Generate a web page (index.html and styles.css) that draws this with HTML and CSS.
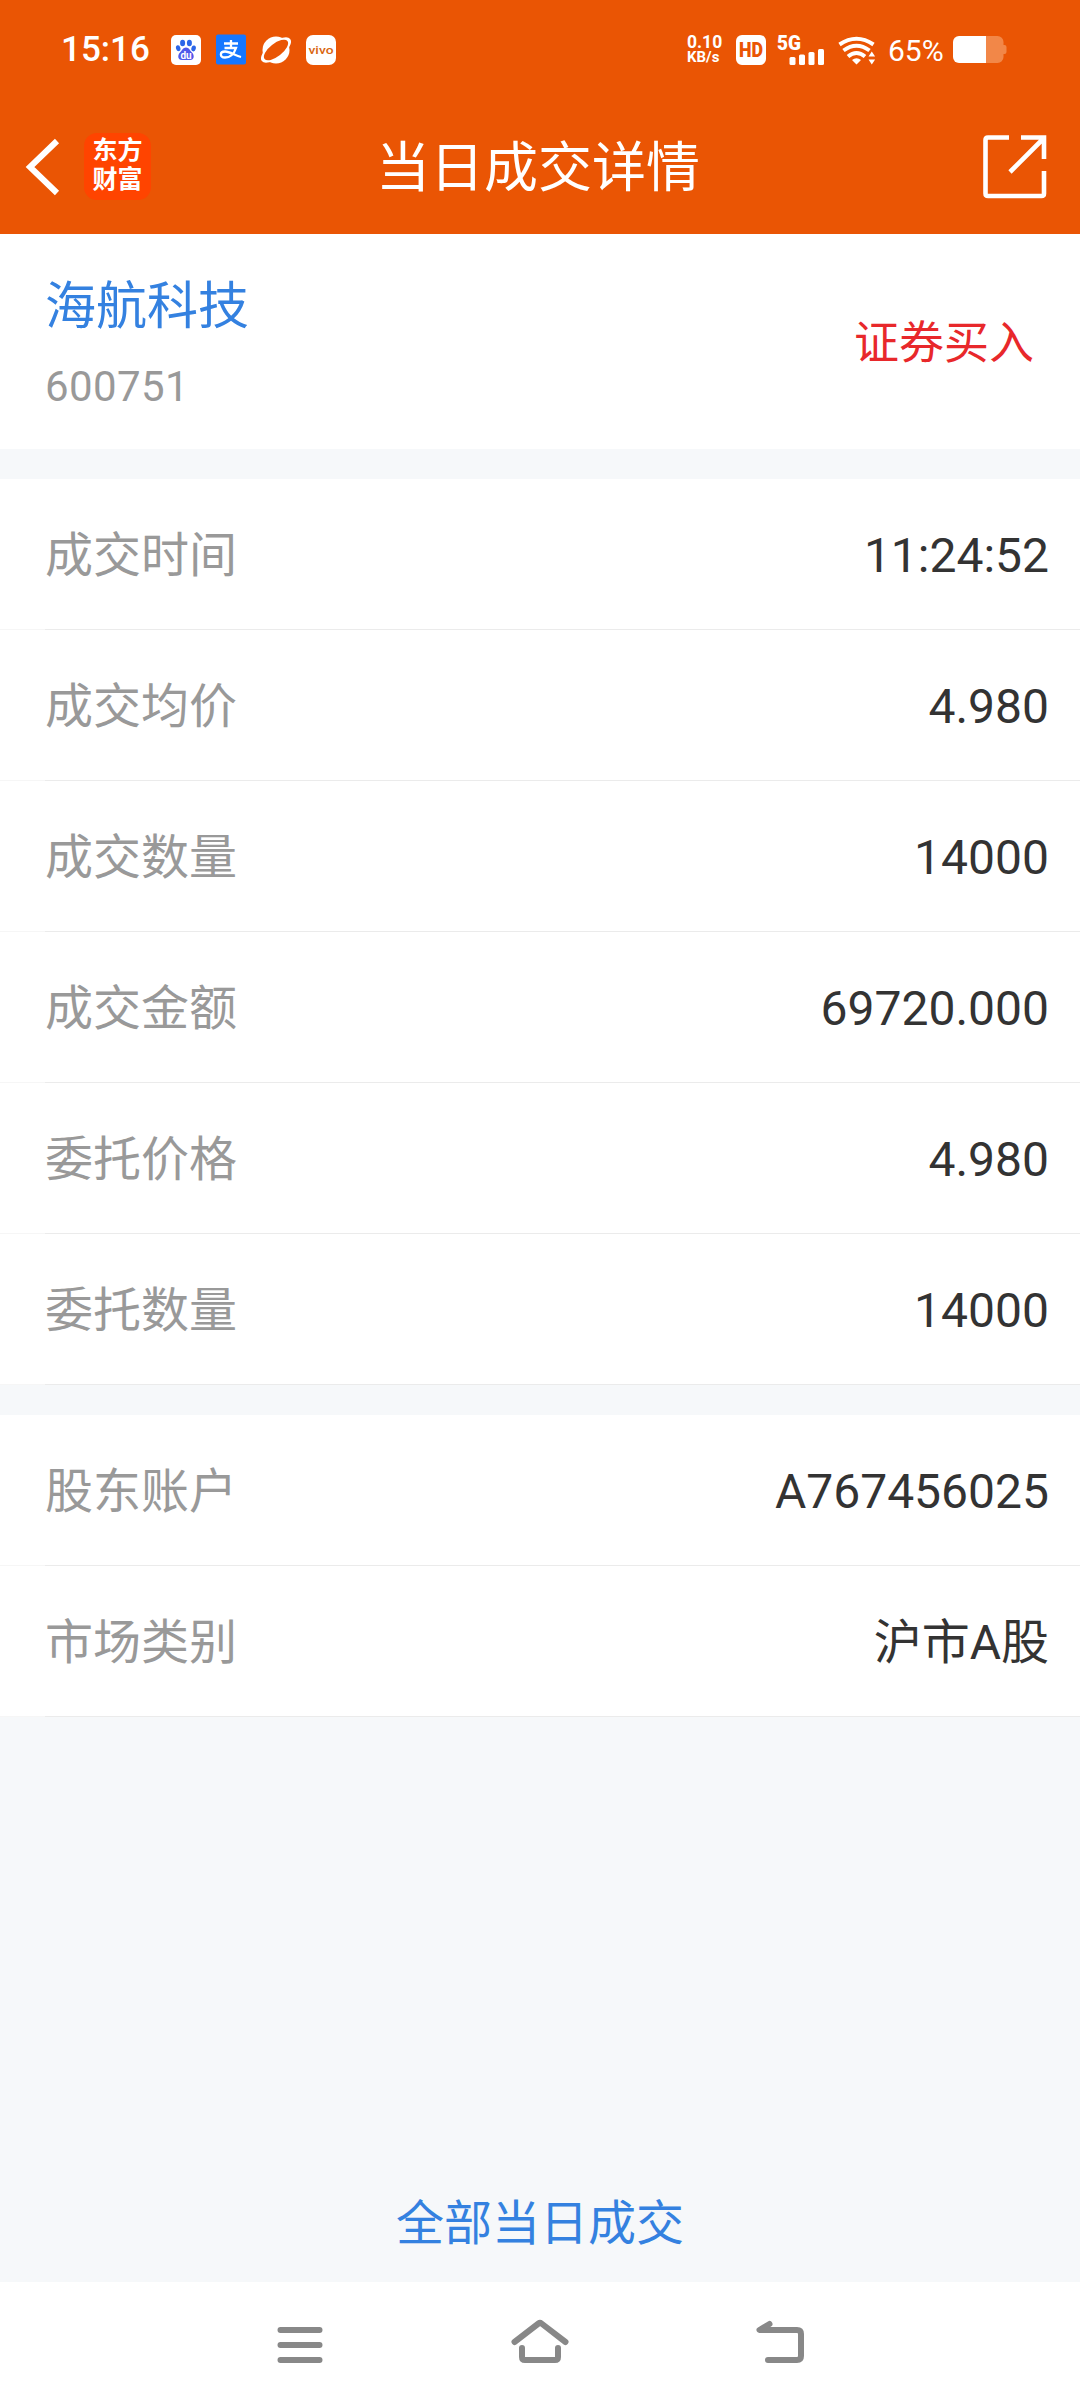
FILE: index.html
```html
<!DOCTYPE html>
<html lang="zh-CN">

<head>
  <meta charset="UTF-8" />
  <meta name="viewport" content="width=device-width, initial-scale=1.0" />
  <title>当日成交详情</title>
  <link rel="stylesheet" href="styles.css">
</head>

<body>
  <header class="header">
    <div class="status-bar">
      <div class="status-left">
        <span class="time">15:16</span>
        <svg class="app-icon" width="30" height="30" viewBox="0 0 30 30">
          <rect width="30" height="30" rx="5" fill="#fff" />
          <g fill="#2b66e8">
            <ellipse cx="11.6" cy="8" rx="2.5" ry="3.2" />
            <ellipse cx="18.4" cy="8" rx="2.5" ry="3.2" />
            <ellipse cx="7.2" cy="13.2" rx="2.2" ry="3" transform="rotate(-15 7.2 13.2)" />
            <ellipse cx="22.6" cy="13.4" rx="2.2" ry="3" transform="rotate(15 22.6 13.4)" />
          </g>
          <path d="M15 12.5c3 0 4 3 6 5 2.600 2.500 2.500 7.500-2 7.500H11c-4.500 0-4.600-5-2-7.500 2-2 3-5 6-5z" fill="#5058ea" />
          <text x="15" y="23.500" class="du" text-anchor="middle">du</text>
        </svg>
        <svg class="app-icon" width="30" height="30" viewBox="0 0 30 30">
          <rect y="-.5" width="30" height="30" rx="2" fill="#1677ff" />
          <path d="M8 8.500h14M15 5v8M8.500 13H20c-1.500 4.500-5 9.500-11 9.500-5.500 0-5.500-6 0-6 5 0 10 4 16 5.500" fill="none" stroke="#fff" stroke-width="2.300" />
        </svg>
        <svg class="app-icon" width="30" height="30" viewBox="0 0 30 30">
          <circle cx="15" cy="15" r="13.500" fill="#fff" />
          <ellipse cx="15" cy="15" rx="18" ry="8" transform="rotate(-38 15 15)" fill="#fff" />
          <ellipse cx="15" cy="15" rx="14.500" ry="6.500" transform="rotate(-38 15 15)" fill="#ea5504" />
        </svg>
        <svg class="app-icon" width="30" height="30" viewBox="0 0 30 30">
          <rect width="30" height="30" rx="7" fill="#fff" />
          <text x="15" y="18.500" class="vivo" text-anchor="middle" textLength="25" lengthAdjust="spacingAndGlyphs">vivo</text>
        </svg>
      </div>
      <div class="status-right">
        <div class="speed">
          <span class="speed-num">0.10</span>
          <span class="speed-unit">KB/s</span>
        </div>
        <svg class="hd" width="30" height="30" viewBox="0 0 30 30">
          <rect width="30" height="30" rx="6" fill="#fff" />
          <text x="15" y="22" class="hd-text" text-anchor="middle" textLength="24" lengthAdjust="spacingAndGlyphs">HD</text>
        </svg>
        <svg class="signal" width="48" height="30" viewBox="0 0 48 30">
          <text x="0" y="14.500" class="net" textLength="24" lengthAdjust="spacingAndGlyphs">5G</text>
          <g fill="#fff">
            <rect x="12.500" y="22" width="6" height="8" rx="1.500" />
            <rect x="22" y="19.500" width="6" height="10.500" rx="1.500" />
            <rect x="31.500" y="17" width="6" height="13" rx="1.500" />
            <rect x="41" y="14" width="6" height="16" rx="1.500" />
          </g>
        </svg>
        <svg class="wifi" width="38" height="30" viewBox="0 0 38 30">
          <g fill="none" stroke="#fff" stroke-width="4">
            <path d="M1.500 9.500q17-11.500 34 0" />
            <path d="M5.500 15.500q13-9.500 26 0" />
            <path d="M10 21.500q8.500-7 17 0" />
          </g>
          <path d="M14 25q4.500-3.500 9 0l-4.500 4.500zM30.500 21.500l3.300-5 3.300 5zM30.500 24.500l3.300 5 3.300-5z" fill="#fff" />
        </svg>
        <span class="percent">65%</span>
        <svg class="battery" width="54" height="27" viewBox="0 0 54 27">
          <path d="M33 0h11.500a6 6 0 0 1 6 6v3h1a2 2 0 0 1 2 2v5a2 2 0 0 1-2 2h-1v3a6 6 0 0 1-6 6H33z" fill="#f28748" />
          <path d="M33 0H6a6 6 0 0 0-6 6v15a6 6 0 0 0 6 6h27z" fill="#fff" />
        </svg>
      </div>
    </div>

    <div class="title-bar">
      <div class="title-left">
        <svg class="back" width="34" height="58" viewBox="0 0 34 58">
          <path d="M31 3L4 29l27 26" fill="none" stroke="#fff" stroke-width="6" />
        </svg>
        <div class="logo"><span>东方</span><span>财富</span></div>
      </div>
      <h1 class="title">当日成交详情</h1>
      <svg class="share" width="64" height="64" viewBox="0 0 64 64">
        <path d="M26 2.500H5Q2.500 2.500 2.500 5v53.500Q2.500 61 5 61h53.500Q61 61 61 58.500V36M38 2.500h23V24M60 4L27 37" fill="none" stroke="#fff" stroke-width="4.600" />
      </svg>
    </div>
  </header>

  <main class="content">
    <section class="stock">
      <div>
        <div class="stock-name">海航科技</div>
        <div class="stock-code">600751</div>
      </div>
      <div class="stock-type">证券买入</div>
    </section>

    <section class="list">
      <div class="row"><span class="label">成交时间</span><span class="value">11:24:52</span></div>
      <div class="row"><span class="label">成交均价</span><span class="value">4.980</span></div>
      <div class="row"><span class="label">成交数量</span><span class="value">14000</span></div>
      <div class="row"><span class="label">成交金额</span><span class="value">69720.000</span></div>
      <div class="row"><span class="label">委托价格</span><span class="value">4.980</span></div>
      <div class="row"><span class="label">委托数量</span><span class="value">14000</span></div>
    </section>

    <section class="list">
      <div class="row"><span class="label">股东账户</span><span class="value">A767456025</span></div>
      <div class="row"><span class="label">市场类别</span><span class="value">沪市A股</span></div>
    </section>

    <a class="all-link">全部当日成交</a>
  </main>

  <nav class="nav-bar">
    <svg width="60" height="60" viewBox="0 0 60 60">
      <path d="M10.500 15h39M10.500 30h39M10.500 45h39" />
    </svg>
    <svg width="60" height="60" viewBox="0 0 60 60">
      <path d="M4.500 27L28.500 8.500q1.500-1.200 3 0L55.500 27M12 33v9q0 3 3 3h30q3 0 3-3v-9" />
    </svg>
    <svg width="60" height="60" viewBox="0 0 60 60">
      <path d="M19.500 9L9.500 15H47q4 0 4 4v22q0 4-4 4H18" />
    </svg>
  </nav>
</body>

</html>
```

FILE: styles.css
```css
* {
  box-sizing: border-box;
}

body {
  margin: 0;
  width: 1080px;
  height: 2408px;
  display: flex;
  flex-direction: column;
  font-family: Roboto, "Noto Sans CJK SC", sans-serif;
  background-color: #f6f8fa;
}

svg {
  display: block;
  overflow: visible;
  flex: none;
}

/* header */
.header {
  height: 234px;
  background-color: #ea5504;
  color: #fff;
}

.status-bar {
  height: 99px;
  padding: 0 73px 0 61px;
  display: flex;
  justify-content: space-between;
  align-items: center;
}

.status-left,
.status-right {
  display: flex;
  align-items: center;
}

.status-left {
  gap: 15px;
}

.time {
  width: 95px;
  font-size: 35px;
  font-weight: 500;
}

.du {
  font-size: 10px;
  font-weight: 700;
  fill: #fff;
}

.vivo {
  font-size: 11px;
  font-weight: 500;
  fill: #d9660f;
}

.speed {
  width: 49px;
  display: flex;
  flex-direction: column;
  font-weight: 700;
}

.speed-num {
  font-size: 17.5px;
  line-height: 16px;
}

.speed-unit {
  font-size: 15px;
  line-height: 15px;
}

.hd {
  margin-right: 11px;
}

.hd-text {
  font-size: 20px;
  font-weight: 900;
  fill: #ea5504;
}

.net {
  font-size: 19.5px;
  font-weight: 900;
  fill: #fff;
}

.signal {
  margin-right: 13px;
}

.wifi {
  margin-right: 12px;
}

.percent {
  width: 65px;
  padding-top: 2px;
  font-size: 30px;
}

.title-bar {
  height: 135px;
  padding: 0 33px 0 26px;
  display: grid;
  grid-template-columns: 1fr auto 1fr;
  align-items: center;
}

.title-left {
  display: flex;
  align-items: center;
  gap: 24px;
}

.logo {
  width: 67px;
  height: 67px;
  padding-bottom: 3px;
  border-radius: 13px;
  background-color: #ff4400;
  display: flex;
  flex-direction: column;
  align-items: center;
  justify-content: center;
  font-size: 25px;
  font-weight: 700;
  line-height: 29px;
}

.title {
  margin: 0;
  padding: 4px 0 0 3px;
  font-size: 54px;
  font-weight: 400;
  line-height: 64px;
}

.share {
  justify-self: end;
}

/* content */
.content {
  flex: 1;
  display: flex;
  flex-direction: column;
  gap: 30px;
}

.stock {
  height: 215px;
  padding: 0 46px 0 45px;
  display: flex;
  justify-content: space-between;
  align-items: center;
  background-color: #fff;
}

.stock-name {
  padding-top: 3px;
  font-size: 51px;
  line-height: 70px;
  color: #3481e0;
}

.stock-code {
  margin-top: 17px;
  font-size: 42px;
  line-height: 56px;
  letter-spacing: 0.4px;
  color: #999;
}

.stock-type {
  padding-bottom: 4px;
  font-size: 45px;
  color: #e8282b;
}

.row {
  height: 151px;
  padding: 2px 31px 0 45px;
  display: flex;
  justify-content: space-between;
  align-items: center;
  font-size: 48px;
  line-height: 70px;
  background: linear-gradient(to right, #f6f6f6 45px, #ebebeb 45px) bottom / 100% 1px no-repeat #fff;
}

.label {
  color: #999;
}

.value {
  color: #333;
}

.all-link {
  margin: auto auto 23px;
  font-size: 48px;
  line-height: 70px;
  color: #3481e0;
}

/* bottom navigation */
.nav-bar {
  height: 126px;
  display: flex;
  justify-content: center;
  align-items: center;
  gap: 180px;
  background-color: #fff;
}

.nav-bar path {
  fill: none;
  stroke: #888;
  stroke-width: 6;
  stroke-linecap: round;
  stroke-linejoin: round;
}
```
